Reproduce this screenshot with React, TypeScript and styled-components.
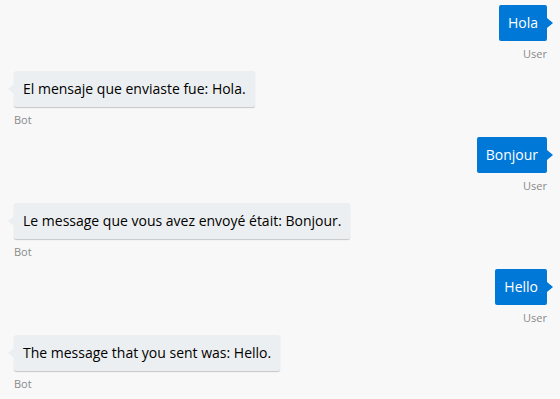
import styled, { createGlobalStyle } from "styled-components";

const GlobalStyle = createGlobalStyle`
	html, body {
		margin: 0;
		padding: 0;
		background: #f8f8f8;
	}
	body {
		font-family: "Open Sans", "Noto Sans", sans-serif;
		font-size: 14px;
		color: #000;
	}
`;

const Messages = styled.div`
	display: flex;
	flex-direction: column;
	gap: 11px;
	padding: 5px 13px 0 14px;
`;

const Group = styled.div<{ $fromUser: boolean }>`
	display: flex;
	flex-direction: column;
	align-items: ${({ $fromUser }) => ($fromUser ? "flex-end" : "flex-start")};
`;

const Bubble = styled.div<{ $fromUser: boolean }>`
	position: relative;
	padding: 8px 9px;
	line-height: 20px;
	border-radius: 2px;
	background: ${({ $fromUser }) => ($fromUser ? "#0078d7" : "#eceff1")};
	color: ${({ $fromUser }) => ($fromUser ? "#fff" : "#000")};
	box-shadow: ${({ $fromUser }) => ($fromUser ? "none" : "0 1px 1px rgba(0, 0, 0, 0.2)")};
`;

const Callout = styled.svg<{ $fromUser: boolean }>`
	position: absolute;
	top: 50%;
	width: 6px;
	height: 10px;
	margin-top: -5px;
	${({ $fromUser }) => ($fromUser ? "right: -6px;" : "left: -6px; transform: scaleX(-1);")}
`;

const From = styled.div`
	margin-top: 6px;
	font-size: 11px;
	line-height: 13px;
	color: #8a8a8a;
`;

type Msg = { text: string; fromUser: boolean };

const messages: Msg[] = [
	{ text: "Hola", fromUser: true },
	{ text: "El mensaje que enviaste fue: Hola.", fromUser: false },
	{ text: "Bonjour", fromUser: true },
	{ text: "Le message que vous avez envoyé était: Bonjour.", fromUser: false },
	{ text: "Hello", fromUser: true },
	{ text: "The message that you sent was: Hello.", fromUser: false },
];

const Message = ({ text, fromUser }: Msg) => (
	<Group $fromUser={fromUser}>
		<Bubble $fromUser={fromUser}>
			<Callout $fromUser={fromUser} viewBox="0 0 6 10">
				<path d="M0 0 L6 5 L0 10 Z" fill={fromUser ? "#0078d7" : "#eceff1"} />
			</Callout>
			{text}
		</Bubble>
		<From>{fromUser ? "User" : "Bot"}</From>
	</Group>
);

export default function App() {
	return (
		<>
			<GlobalStyle />
			<Messages>
				{messages.map((m, i) => (
					<Message key={i} {...m} />
				))}
			</Messages>
		</>
	);
}
